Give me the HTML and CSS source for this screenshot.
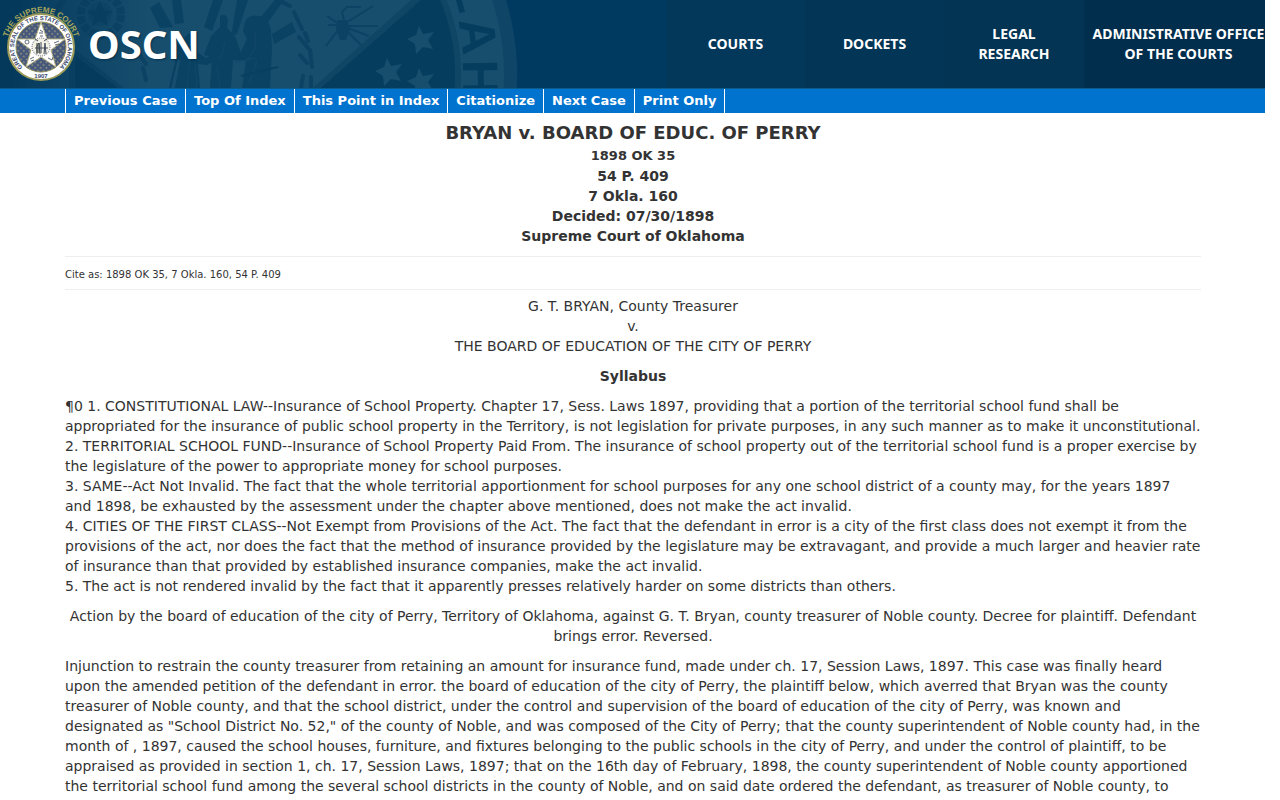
FILE: index.html
```html
<!doctype html>
<html lang="en">
<head>
    <meta charset="utf-8">
    <title>BRYAN v. BOARD OF EDUC. OF PERRY</title>
    <link rel="stylesheet" href="styles.css">
</head>
<body>
    <header class="site-header">
        <svg class="header-art" width="665" height="88" viewBox="0 0 665 88" aria-hidden="true">
            <defs>
                <linearGradient id="fade">
                    <stop offset="0" stop-color="#04395b"/>
                    <stop offset="1" stop-color="#04395b" stop-opacity="0"/>
                </linearGradient>
            </defs>
            <!-- rings of the state seal -->
            <circle cx="265" cy="74" r="252" fill="#0f4668"/>
            <circle cx="265" cy="74" r="239" fill="#174e6e"/>
            <circle cx="265" cy="74" r="196" fill="#0f4565"/>
            <circle cx="265" cy="74" r="190" fill="#053d5e"/>
            <!-- star -->
            <path fill="#0f4565" d="M60 0H421L321 88H118L40 30Z"/>
            <path fill="#174e6e" d="M66 0H411L313 88H124L50 30Z"/>
            <g fill="#174e6e">
                <path id="star" d="M419 26l4 8 11-2-6 8 5 9-10-2-7 7-1-10-8-5 9-4z"/>
                <use href="#star" x="-32" y="32"/>
                <use href="#star" x="0" y="42"/>
            </g>
            <g class="ring-letters" fill="#053d5e">
                <text transform="translate(456 0) rotate(75)">L</text>
                <text transform="translate(461 38) rotate(82)">A</text>
                <text transform="translate(463 78) rotate(89)">H</text>
            </g>
            <!-- wreath and star on the left arm -->
            <circle cx="101" cy="15" r="20" fill="none" stroke="#0d4364" stroke-width="8" stroke-dasharray="7 2"/>
            <circle cx="100" cy="14" r="12" fill="#124869"/>
            <path fill="#0a4263" d="M100 1l4 9 9 1-7 6 2 9-8-5-8 5 2-9-7-6 9-1z"/>
            <!-- rays -->
            <g fill="#0a4263">
                <path d="M160 28L150 8l9-6 14 25zM175 24l-3-24h9l3 23zM204 27L213 0h10l-11 31zM231 37L237 0h11l-11 34z"/>
                <path d="M258 20L275 0h9l-18 25zM272 34l20-12 4 10-22 12z"/>
            </g>
            <!-- figures -->
            <g fill="#0a4263">
                <path d="M220 16q7-4 8 5l-1 7 9 10 5 15 9 3-1 5-16-1-2 28h-21l2-31-8-2 7-19 9-9z"/>
                <path d="M245 22q4-8 13-6 11 1 13 15l1 18-2 39h-28l4-28-7-4 8-17-4-8z"/>
                <path d="M183 39l6-6 6 6 2 13 9 6 10-5 3 5-12 7-9-1 2 24h-25l5-27-8-10z"/>
            </g>
            <path fill="none" stroke="#12496a" stroke-width="1" d="M225 43l-5 17M217 66l3 22M234 62l22-4M255 32v17l-10 14M257 60l-8 24M190 60l-3 28M195 63l2 25"/>
            <path fill="none" stroke="#093f60" stroke-width="2" d="M241 76l37-9M178 54l-8 34"/>
            <!-- laurel -->
            <g fill="none" stroke="#0c4364" stroke-width="4" stroke-linecap="round">
                <path d="M280 1l10 5M294 12l8 17M305 33l3 8M299 37l9 11M300 55l7 8M310 50l2 17M303 76l-2 12M311 77v11"/>
                <path d="M139 54l7 10M143 68l3 12"/>
            </g>
            <!-- crossed tools -->
            <path fill="none" stroke="#0c4364" stroke-width="2" d="M326 46l9-12 9-9M344 20l-2-8 5-5h14M344 24l29-18M344 26l34 0M345 27l24 9M344 28l17 17M339 24l-12-8M339 25l-11 0"/>
            <path fill="#0c4364" d="M338 20h9l3 9-4 11h-6l-4-11z"/>
            <rect width="150" height="88" fill="url(#fade)"/>
        </svg>

        <a class="brand" href="#">
            <svg class="seal" width="76" height="84" viewBox="0 2 76 84" role="img" aria-label="Supreme Court seal">
                <defs>
                    <path id="arc-outer" d="M2.5 47a34.5 34.5 0 0 1 69 0"/>
                    <path id="arc-inner" d="M23.5 70.4a27 27 0 1 1 27 0"/>
                    <pattern id="dots" width="4" height="4" patternUnits="userSpaceOnUse" patternTransform="rotate(45)">
                        <rect width="4" height="4" fill="#45577b"/>
                        <circle cx="2" cy="2" r="1" fill="#8d8f7c"/>
                    </pattern>
                </defs>
                <text class="seal-court"><textPath href="#arc-outer" startOffset="50%">THE SUPREME COURT</textPath></text>
                <circle cx="37" cy="47" r="33" fill="#fff" stroke="#9b9a58" stroke-width="2"/>
                <circle cx="37" cy="47" r="25" fill="url(#dots)" stroke="#8d8c59" stroke-width="1"/>
                <text class="seal-state"><textPath href="#arc-inner" startOffset="50%">GREAT SEAL OF THE STATE OF OKLAHOMA</textPath></text>
                <path fill="#fff" stroke="#b7b383" stroke-width="1" d="M37 22l6 17 18 0-14 11 5 17-15-10-15 10 5-17-14-11 18 0z"/>
                <circle cx="37" cy="47" r="9" fill="#f3f1e6" stroke="#59657a" stroke-width="1" stroke-dasharray="1 1"/>
                <path fill="#8e9080" d="M32 43h4v10h-4z"/>
                <path fill="none" stroke="#414b5c" stroke-width="1" d="M33 54v-8l2-3 1 11M37 53V42M40 54l1-11 1 11M31 48h13M34 41l-3-2M40 41l3-2"/>
                <g fill="none" stroke="#606b79" stroke-width="1">
                    <path d="M35 33h4M36 30l3 2M36 36h3M50 43l5-2M51 45l4-1M44 58l4 2 1-3M26 59l4-2M27 61l3-1"/>
                    <circle cx="23" cy="42" r="2"/>
                </g>
                <text class="seal-year" x="37" y="78">1907</text>
            </svg>
            <span class="brand-name">OSCN</span>
        </a>

        <nav class="main-nav" aria-label="Main">
            <a class="courts" href="#">COURTS</a>
            <a class="dockets" href="#">DOCKETS</a>
            <a class="legal" href="#">LEGAL<br>RESEARCH</a>
            <a class="admin" href="#">ADMINISTRATIVE OFFICE<br>OF THE COURTS</a>
        </nav>
    </header>

    <nav class="doc-nav" aria-label="Document">
        <a href="#">Previous Case</a>
        <a href="#">Top Of Index</a>
        <a href="#">This Point in Index</a>
        <a href="#">Citationize</a>
        <a href="#">Next Case</a>
        <a href="#">Print Only</a>
    </nav>

    <main class="document">
        <div class="case-heading">
            <h1>BRYAN v. BOARD OF EDUC. OF PERRY</h1>
            <div class="citation">1898 OK 35</div>
            54 P. 409<br>
            7 Okla. 160<br>
            Decided: 07/30/1898<br>
            Supreme Court of Oklahoma
        </div>
        <div class="cite-as">Cite as: 1898 OK 35, 7 Okla. 160, 54 P. 409</div>

        <p class="center">G. T. BRYAN, County Treasurer<br>v.<br>THE BOARD OF EDUCATION OF THE CITY OF PERRY</p>
        <p class="center"><strong>Syllabus</strong></p>

        <p>¶0 1. CONSTITUTIONAL LAW--Insurance of School Property. Chapter 17, Sess. Laws 1897, providing that a portion of the territorial school fund shall be appropriated for the insurance of public school property in the Territory, is not legislation for private purposes, in any such manner as to make it unconstitutional.<br>
        2. TERRITORIAL SCHOOL FUND--Insurance of School Property Paid From. The insurance of school property out of the territorial school fund is a proper exercise by the legislature of the power to appropriate money for school purposes.<br>
        3. SAME--Act Not Invalid. The fact that the whole territorial apportionment for school purposes for any one school district of a county may, for the years 1897 and 1898, be exhausted by the assessment under the chapter above mentioned, does not make the act invalid.<br>
        4. CITIES OF THE FIRST CLASS--Not Exempt from Provisions of the Act. The fact that the defendant in error is a city of the first class does not exempt it from the provisions of the act, nor does the fact that the method of insurance provided by the legislature may be extravagant, and provide a much larger and heavier rate of insurance than that provided by established insurance companies, make the act invalid.<br>
        5. The act is not rendered invalid by the fact that it apparently presses relatively harder on some districts than others.</p>

        <p class="center">Action by the board of education of the city of Perry, Territory of Oklahoma, against G. T. Bryan, county treasurer of Noble county. Decree for plaintiff. Defendant brings error. Reversed.</p>

        <p>Injunction to restrain the county treasurer from retaining an amount for insurance fund, made under ch. 17, Session Laws, 1897. This case was finally heard upon the amended petition of the defendant in error. the board of education of the city of Perry, the plaintiff below, which averred that Bryan was the county treasurer of Noble county, and that the school district, under the control and supervision of the board of education of the city of Perry, was known and designated as "School District No. 52," of the county of Noble, and was composed of the City of Perry; that the county superintendent of Noble county had, in the month of , 1897, caused the school houses, furniture, and fixtures belonging to the public schools in the city of Perry, and under the control of plaintiff, to be appraised as provided in section 1, ch. 17, Session Laws, 1897; that on the 16th day of February, 1898, the county superintendent of Noble county apportioned the territorial school fund among the several school districts in the county of Noble, and on said date ordered the defendant, as treasurer of Noble county, to</p>
    </main>
</body>
</html>
```

FILE: styles.css
```css
* {
    box-sizing: border-box;
}
body {
    margin: 0 15px 0 0;
    background: #fff;
    color: #333;
    font: 14px/20px "DejaVu Sans", Verdana, sans-serif;
}
a {
    color: inherit;
    text-decoration: none;
}

/* header */
.site-header {
    position: relative;
    display: flex;
    justify-content: space-between;
    height: 89px;
    overflow: hidden;
    background: #003a61;
    border-bottom: 1px solid #0b5c8c;
    color: #fff;
    font-family: "Noto Sans", "Open Sans", sans-serif;
}
.header-art {
    position: absolute;
    top: 0;
    left: 0;
}
.ring-letters {
    font: bold 50px "Liberation Sans", Arial, sans-serif;
    text-anchor: middle;
}
.brand {
    position: relative;
    display: flex;
    align-items: center;
    gap: 8px;
    padding-left: 4px;
}
.brand-name {
    font-size: 40px;
    font-weight: bold;
    line-height: 48px;
    text-shadow: 1px 1px 2px #04304c;
}
.seal {
    overflow: visible;
}
.seal text {
    font-family: "Liberation Sans", Arial, sans-serif;
    font-weight: bold;
    text-anchor: middle;
}
.seal .seal-court {
    font-size: 8px;
    fill: #a5a45c;
}
.seal .seal-state,
.seal .seal-year {
    font-size: 6px;
    fill: #34456c;
}

.main-nav {
    position: relative;
    display: grid;
    grid-template-columns: 139px 139px 140px 181px;
    font-size: 14px;
    font-weight: bold;
    text-align: center;
}
.main-nav a {
    display: grid;
    place-content: center;
    white-space: nowrap;
}
.main-nav .courts {
    background: #03385a;
}
.main-nav .dockets {
    background: #033656;
}
.main-nav .legal {
    background: #033453;
}
.main-nav .admin {
    padding-left: 8px;
    background: #022e4d;
}

/* case links */
.doc-nav {
    display: flex;
    padding: 0 65px;
    background: #0073cf;
    color: #fff;
    font-size: 13px;
    font-weight: bold;
    line-height: 24px;
}
.doc-nav a {
    padding: 0 8px;
    border-right: 1px solid #fff;
}
.doc-nav a:first-child {
    border-left: 1px solid #fff;
}

/* opinion */
.document {
    padding: 6px 64px 0 65px;
}
.case-heading {
    padding-bottom: 10px;
    font-weight: bold;
    text-align: center;
}
.case-heading h1 {
    margin: 0;
    font-size: 18px;
    line-height: 28px;
}
.citation {
    padding-bottom: 1px;
    font-size: 13px;
    line-height: 18px;
}
.cite-as {
    padding: 8px 0 4px;
    border: solid #eee;
    border-width: 1px 0;
    font-size: 10px;
}
.document p {
    margin: 0 0 10px;
}
.cite-as + p {
    padding-top: 6px;
}
.center {
    text-align: center;
}
```
